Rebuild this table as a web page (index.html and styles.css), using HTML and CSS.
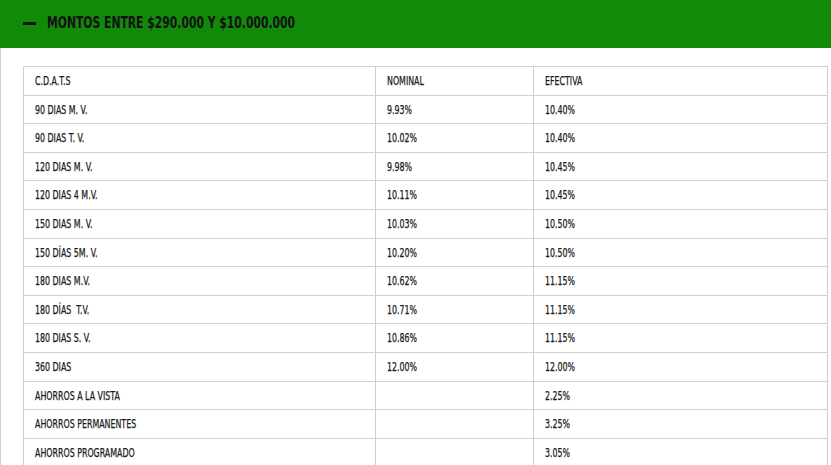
FILE: index.html
```html
<!DOCTYPE html>
<html lang="es">
<head>
<meta charset="utf-8">
<title>Tasas</title>
<link rel="stylesheet" href="styles.css">
</head>
<body>
<div class="panel">
  <div class="panel-head">
    <span class="minus"></span>
    <h2 class="panel-title"><span class="t">MONTOS ENTRE $290.000 Y $10.000.000</span></h2>
  </div>
  <div class="panel-body">
    <table class="rates">
      <tr><td class="c1"><span class="t">C.D.A.T.S</span></td><td class="c2"><span class="t">NOMINAL</span></td><td><span class="t">EFECTIVA</span></td></tr>
      <tr><td><span class="t">90 DIAS M. V.</span></td><td><span class="t">9.93%</span></td><td><span class="t">10.40%</span></td></tr>
      <tr><td><span class="t">90 DIAS T. V.</span></td><td><span class="t">10.02%</span></td><td><span class="t">10.40%</span></td></tr>
      <tr><td><span class="t">120 DIAS M. V.</span></td><td><span class="t">9.98%</span></td><td><span class="t">10.45%</span></td></tr>
      <tr><td><span class="t">120 DIAS 4 M.V.</span></td><td><span class="t">10.11%</span></td><td><span class="t">10.45%</span></td></tr>
      <tr><td><span class="t">150 DIAS M. V.</span></td><td><span class="t">10.03%</span></td><td><span class="t">10.50%</span></td></tr>
      <tr><td><span class="t">150 DÍAS 5M. V.</span></td><td><span class="t">10.20%</span></td><td><span class="t">10.50%</span></td></tr>
      <tr><td><span class="t">180 DIAS M.V.</span></td><td><span class="t">10.62%</span></td><td><span class="t">11.15%</span></td></tr>
      <tr><td><span class="t">180 DÍAS&nbsp; T.V.</span></td><td><span class="t">10.71%</span></td><td><span class="t">11.15%</span></td></tr>
      <tr><td><span class="t">180 DIAS S. V.</span></td><td><span class="t">10.86%</span></td><td><span class="t">11.15%</span></td></tr>
      <tr><td><span class="t">360 DIAS</span></td><td><span class="t">12.00%</span></td><td><span class="t">12.00%</span></td></tr>
      <tr><td><span class="t">AHORROS A LA VISTA</span></td><td></td><td><span class="t">2.25%</span></td></tr>
      <tr><td><span class="t">AHORROS PERMANENTES</span></td><td></td><td><span class="t">3.25%</span></td></tr>
      <tr><td><span class="t">AHORROS PROGRAMADO</span></td><td></td><td><span class="t">3.05%</span></td></tr>
    </table>
  </div>
</div>
</body>
</html>
```
FILE: styles.css
```css
html, body {
  margin: 0;
  padding: 0;
  background: #ffffff;
}
body {
  font-family: "DejaVu Sans Condensed", "DejaVu Sans", sans-serif;
  color: #1a1a1a;
  overflow: hidden;
}
.t {
  display: inline-block;
  white-space: nowrap;
  transform-origin: left center;
}
.panel {
  width: 831px;
  border-left: 1px solid #d0d0d0;
  box-sizing: border-box;
}
.panel-head {
  height: 48px;
  background: #118a0a;
  display: flex;
  align-items: center;
  padding-left: 23px;
  padding-bottom: 2px;
  box-sizing: border-box;
  margin-left: -1px;
}
.minus {
  width: 13px;
  height: 3px;
  background: #111;
  margin-right: 11px;
  margin-top: 1px;
}
.panel-title {
  margin: 0;
  font-size: 16px;
  line-height: 20px;
  font-weight: bold;
  color: #111;
}
.panel-title .t {
  transform: scaleX(0.75);
}
.panel-body {
  padding: 18px 3px 0 22px;
}
.rates {
  width: 805px;
  border-collapse: collapse;
  font-size: 12px;
}
.rates td {
  border: 1px solid #cfcfcf;
  padding: 6px 11px 4px;
  height: 17.6px;
  line-height: 17.6px;
  color: #1a1a1a;
  text-align: left;
  -webkit-text-stroke: 0.25px #1a1a1a;
}
.rates td .t {
  transform: scaleX(0.73);
}
.rates .c1 { width: 329px; }
.rates .c2 { width: 135px; }
```
